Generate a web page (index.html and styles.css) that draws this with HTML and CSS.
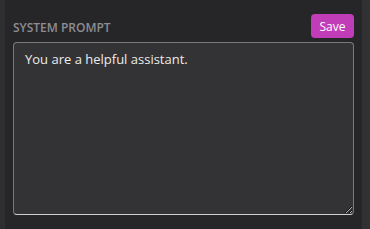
FILE: index.html
```html
<!DOCTYPE html>
<html>
<head>
<meta charset="utf-8">
<link rel="stylesheet" href="styles.css">
</head>
<body>
<div class="frame">
  <div class="strip-left"></div>
  <div class="panel">
    <div class="header">
      <span class="label">SYSTEM PROMPT</span>
      <button class="save">Save</button>
    </div>
    <textarea class="prompt">You are a helpful assistant.</textarea>
  </div>
  <div class="strip-right"></div>
</div>
</body>
</html>
```
FILE: styles.css
```css
html, body {
  margin: 0;
  padding: 0;
  background: #262628;
  width: 370px;
  height: 229px;
  overflow: hidden;
  font-family: "Open Sans", "Noto Sans", sans-serif;
}
.frame {
  display: flex;
  height: 229px;
}
.strip-left {
  width: 5px;
  background: #2e2e30;
}
.strip-right {
  width: 8px;
  background: #313133;
}
.panel {
  flex: 1;
  display: flex;
  flex-direction: column;
  padding: 14px 8px 14px 8px;
  gap: 4px;
}
.header {
  display: flex;
  justify-content: space-between;
  align-items: center;
  height: 24px;
}
.label {
  color: #8d8d92;
  font-size: 12px;
  font-weight: 600;
  padding-top: 2px;
}
.save {
  width: 43px;
  height: 24px;
  background: #c13db7;
  color: #ffffff;
  border: none;
  border-radius: 4px;
  font-family: "Open Sans", "Noto Sans", sans-serif;
  font-size: 12px;
  font-weight: 500;
  padding: 0;
}
.prompt {
  height: 173px;
  box-sizing: border-box;
  background: #333335;
  color: #ececec;
  border: 1px solid #7a7a7c;
  border-bottom-color: #cfcfcf;
  border-radius: 4px;
  padding: 7px 11px;
  font-family: "Open Sans", "Noto Sans", sans-serif;
  font-size: 13px;
  font-weight: 500;
  line-height: 18px;
  outline: none;
  resize: vertical;
}
```
